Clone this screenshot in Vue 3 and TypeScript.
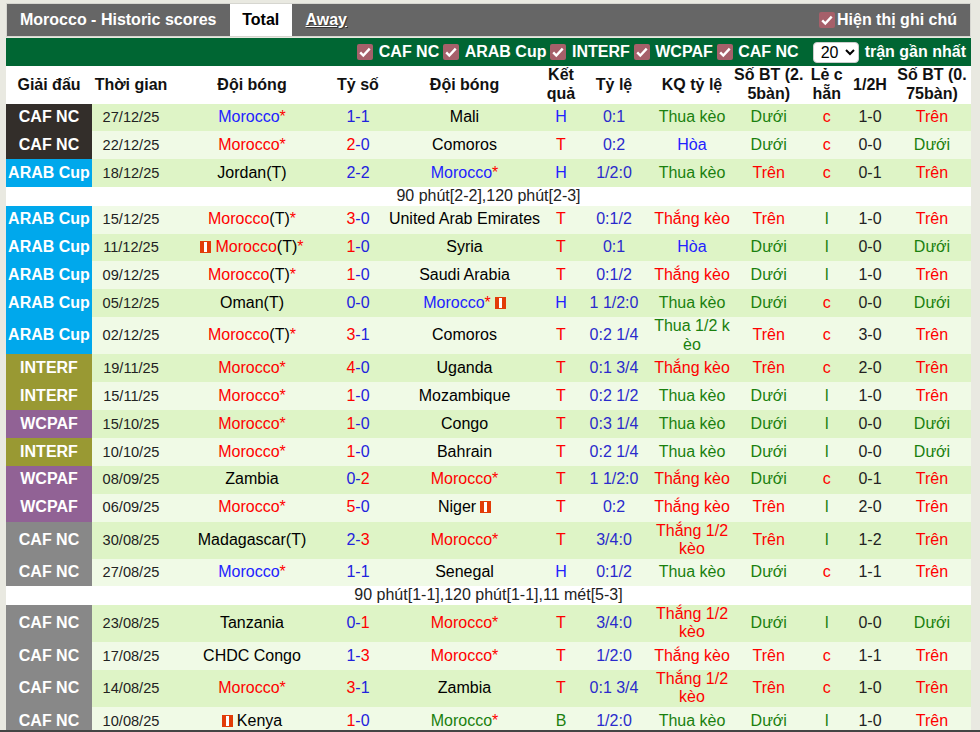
<script setup lang="ts">
import { ref } from 'vue'

interface Team {
  name: string
  tone?: 'red' | 'blue' | 'green'
  neutral?: boolean
  star?: boolean
  card?: 'before' | 'after'
}

interface Match {
  league: string
  leagueClass: string
  date: string
  home: Team
  score: string
  away: Team
  res: string
  odds: string
  kq: string
  bt: string
  le: string
  half: string
  bt2: string
  note?: string
}

const LEAGUE: Record<string, [string, string]> = {
  caf1: ['CAF NC', 'lg-caf-dark'],
  arab: ['ARAB Cup', 'lg-arab'],
  interf: ['INTERF', 'lg-interf'],
  wcpaf: ['WCPAF', 'lg-wcpaf'],
  caf2: ['CAF NC', 'lg-caf'],
}

const mor = (tone: Team['tone'], neutral = false, card?: Team['card']): Team => ({
  name: 'Morocco',
  tone,
  neutral,
  star: true,
  card,
})
const opp = (name: string, card?: Team['card']): Team => ({ name, card })

function m(
  lg: string,
  date: string,
  home: Team,
  score: string,
  away: Team,
  rest: string,
  note?: string,
): Match {
  const [res, odds, kq, bt, le, half, bt2] = rest.split('|')
  return {
    league: LEAGUE[lg][0],
    leagueClass: LEAGUE[lg][1],
    date,
    home,
    score,
    away,
    res,
    odds,
    kq,
    bt,
    le,
    half,
    bt2,
    note,
  }
}

const matches: Match[] = [
  m('caf1', '27/12/25', mor('blue'), '1-1', opp('Mali'), 'H|0:1|Thua kèo|Dưới|c|1-0|Trên'),
  m('caf1', '22/12/25', mor('red'), '2-0', opp('Comoros'), 'T|0:2|Hòa|Dưới|c|0-0|Dưới'),
  m('arab', '18/12/25', opp('Jordan(T)'), '2-2', mor('blue'), 'H|1/2:0|Thua kèo|Trên|c|0-1|Trên', '90 phút[2-2],120 phút[2-3]'),
  m('arab', '15/12/25', mor('red', true), '3-0', opp('United Arab Emirates'), 'T|0:1/2|Thắng kèo|Trên|l|1-0|Trên'),
  m('arab', '11/12/25', mor('red', true, 'before'), '1-0', opp('Syria'), 'T|0:1|Hòa|Dưới|l|0-0|Dưới'),
  m('arab', '09/12/25', mor('red', true), '1-0', opp('Saudi Arabia'), 'T|0:1/2|Thắng kèo|Dưới|l|1-0|Trên'),
  m('arab', '05/12/25', opp('Oman(T)'), '0-0', mor('blue', false, 'after'), 'H|1 1/2:0|Thua kèo|Dưới|c|0-0|Dưới'),
  m('arab', '02/12/25', mor('red', true), '3-1', opp('Comoros'), 'T|0:2 1/4|Thua 1/2 kèo|Trên|c|3-0|Trên'),
  m('interf', '19/11/25', mor('red'), '4-0', opp('Uganda'), 'T|0:1 3/4|Thắng kèo|Trên|c|2-0|Trên'),
  m('interf', '15/11/25', mor('red'), '1-0', opp('Mozambique'), 'T|0:2 1/2|Thua kèo|Dưới|l|1-0|Trên'),
  m('wcpaf', '15/10/25', mor('red'), '1-0', opp('Congo'), 'T|0:3 1/4|Thua kèo|Dưới|l|0-0|Dưới'),
  m('interf', '10/10/25', mor('red'), '1-0', opp('Bahrain'), 'T|0:2 1/4|Thua kèo|Dưới|l|0-0|Dưới'),
  m('wcpaf', '08/09/25', opp('Zambia'), '0-2', mor('red'), 'T|1 1/2:0|Thắng kèo|Dưới|c|0-1|Trên'),
  m('wcpaf', '06/09/25', mor('red'), '5-0', opp('Niger', 'after'), 'T|0:2|Thắng kèo|Trên|l|2-0|Trên'),
  m('caf2', '30/08/25', opp('Madagascar(T)'), '2-3', mor('red'), 'T|3/4:0|Thắng 1/2 kèo|Trên|l|1-2|Trên'),
  m('caf2', '27/08/25', mor('blue'), '1-1', opp('Senegal'), 'H|0:1/2|Thua kèo|Dưới|c|1-1|Trên', '90 phút[1-1],120 phút[1-1],11 mét[5-3]'),
  m('caf2', '23/08/25', opp('Tanzania'), '0-1', mor('red'), 'T|3/4:0|Thắng 1/2 kèo|Dưới|l|0-0|Dưới'),
  m('caf2', '17/08/25', opp('CHDC Congo'), '1-3', mor('red'), 'T|1/2:0|Thắng kèo|Trên|c|1-1|Trên'),
  m('caf2', '14/08/25', mor('red'), '3-1', opp('Zambia'), 'T|0:1 3/4|Thắng 1/2 kèo|Trên|c|1-0|Trên'),
  m('caf2', '10/08/25', opp('Kenya', 'before'), '1-0', mor('green'), 'B|1/2:0|Thua kèo|Dưới|l|1-0|Trên'),
]

const filters = ['CAF NC', 'ARAB Cup', 'INTERF', 'WCPAF', 'CAF NC']
const headers = ['Giải đấu', 'Thời gian', 'Đội bóng', 'Tỷ số', 'Đội bóng', 'Kết quả', 'Tỷ lệ', 'KQ tỷ lệ', 'Số BT (2.5bàn)', 'Lẻ c hẵn', '1/2H', 'Số BT (0.75bàn)']
const limit = ref('20')

function resTone(r: string) {
  return r === 'T' ? 'red' : r === 'H' ? 'blue' : 'green'
}
function kqTone(k: string) {
  return k.startsWith('Thắng') ? 'red' : k === 'Hòa' ? 'blue' : 'green'
}
function btTone(b: string) {
  return b === 'Trên' ? 'red' : 'green'
}
function leTone(l: string) {
  return l === 'c' ? 'red' : 'green'
}
function scoreParts(s: string) {
  const [a, b] = s.split('-')
  return {
    a,
    b,
    aTone: Number(a) > Number(b) ? 'red' : 'score',
    bTone: Number(b) > Number(a) ? 'red' : 'score',
  }
}
</script>

<template>
  <div class="page">
    <div class="topbar">
      <span class="title">Morocco - Historic scores</span>
      <span class="tab">Total</span>
      <a class="away" href="#">Away</a>
      <label class="show-note">
        <span class="chk">
          <svg viewBox="0 0 16 16" width="16" height="16"><path d="M3.2 8.4l3.1 3.2 6.4-7" fill="none" stroke="#fff" stroke-width="2.4" /></svg>
        </span>
        Hiện thị ghi chú
      </label>
    </div>

    <div class="filterbar">
      <label v-for="(f, i) in filters" :key="i" class="filter">
        <span class="chk">
          <svg viewBox="0 0 16 16" width="16" height="16"><path d="M3.2 8.4l3.1 3.2 6.4-7" fill="none" stroke="#fff" stroke-width="2.4" /></svg>
        </span>
        {{ f }}
      </label>
      <select v-model="limit" class="limit">
        <option value="10">10</option>
        <option value="20">20</option>
      </select>
      <span class="recent">trận gần nhất</span>
    </div>

    <div class="row head">
      <div v-for="(h, i) in headers" :key="i" class="cell"><span>{{ h }}</span></div>
    </div>

    <template v-for="(r, i) in matches" :key="i">
      <div class="row" :class="i % 2 === 0 ? 'even' : 'odd'">
        <div class="cell league" :class="r.leagueClass"><span>{{ r.league }}</span></div>
        <div class="cell date"><span>{{ r.date }}</span></div>
        <div v-for="(t, side) in [r.home, null, r.away]" :key="side" class="cell">
          <span v-if="t" class="team">
            <svg v-if="t.card === 'before'" class="card before" viewBox="0 0 11 12" width="11" height="12"><rect width="11" height="12" fill="#e23c08" /><rect x="4" y="1" width="3" height="10" fill="#fff" /></svg>
            <span :class="t.tone">{{ t.name }}</span><template v-if="t.neutral">(T)</template><span v-if="t.star" class="red">*</span>
            <svg v-if="t.card === 'after'" class="card after" viewBox="0 0 11 12" width="11" height="12"><rect width="11" height="12" fill="#e23c08" /><rect x="4" y="1" width="3" height="10" fill="#fff" /></svg>
          </span>
          <span v-else>
            <span :class="scoreParts(r.score).aTone">{{ scoreParts(r.score).a }}</span><span class="score">-</span><span :class="scoreParts(r.score).bTone">{{ scoreParts(r.score).b }}</span>
          </span>
        </div>
        <div class="cell" :class="resTone(r.res)"><span>{{ r.res }}</span></div>
        <div class="cell odds"><span>{{ r.odds }}</span></div>
        <div class="cell" :class="kqTone(r.kq)"><span>{{ r.kq }}</span></div>
        <div class="cell" :class="btTone(r.bt)"><span>{{ r.bt }}</span></div>
        <div class="cell" :class="leTone(r.le)"><span>{{ r.le }}</span></div>
        <div class="cell half"><span>{{ r.half }}</span></div>
        <div class="cell" :class="btTone(r.bt2)"><span>{{ r.bt2 }}</span></div>
      </div>
      <div v-if="r.note" class="note">{{ r.note }}</div>
    </template>
  </div>
</template>

<style scoped>
.page {
  box-sizing: border-box;
  width: 980px;
  height: 732px;
  padding: 3px 9px 0 6px;
  overflow: hidden;
  background: #e9e9e1;
  border-bottom: 2px solid #444;
  font-family: "Liberation Sans", Arial, sans-serif;
  font-size: 16px;
  line-height: 18.5px;
  color: #000;
}

.topbar {
  box-sizing: border-box;
  display: flex;
  align-items: stretch;
  height: 34px;
  background: #666;
  border: 1px solid #d6d6d0;
  color: #fff;
  font-weight: bold;
}

.title {
  align-self: center;
  margin: 0 13px;
}

.tab {
  width: 62.5px;
  background: #fff;
  color: #000;
  text-align: center;
  line-height: 32px;
}

.away {
  align-self: center;
  margin-left: 13.5px;
  color: #fff;
  text-shadow: 1px 1px 1px #333;
}

.show-note {
  display: flex;
  align-items: center;
  gap: 2px;
  margin-left: auto;
  padding-right: 13px;
}

.chk {
  flex: none;
  width: 16px;
  height: 16px;
  background: #a6606a;
  border-radius: 2px;
}

.chk svg {
  display: block;
}

.filterbar {
  display: flex;
  align-items: center;
  justify-content: flex-end;
  height: 28px;
  margin-top: 1px;
  padding-right: 5px;
  background: #006633;
  color: #fff;
  font-weight: bold;
}

.filter {
  display: flex;
  align-items: center;
  gap: 5.5px;
  margin-right: 4px;
}

.limit {
  box-sizing: border-box;
  width: 46px;
  height: 21px;
  margin: 0 6px 0 10px;
  padding: 0 0 0 3px;
  background-color: #fff;
  border: 1px solid #ccc;
  border-radius: 4px;
  font-family: inherit;
  font-size: 16px;
  color: #000;
}

.row {
  display: grid;
  grid-template-columns: 86px 78px 164px 48px 165px 28px 78px 78px 75.5px 40.5px 46px 78px;
  min-height: 27.9px;
}

/* stripes skip the note rows, so they just follow the match index */
.even {
  background: #def4c6;
}

.odd {
  background: #f0fae6;
}

.head {
  height: 37.5px;
  background: #fff;
  font-weight: bold;
  color: #111;
}

.cell {
  display: flex;
  align-items: center;
  justify-content: center;
  text-align: center;
  word-break: break-all;
}

.head .cell:nth-child(1),
.head .cell:nth-child(2),
.head .cell:nth-child(3),
.head .cell:nth-child(5) {
  white-space: nowrap;
}

.head .cell:nth-child(4),
.head .cell:nth-child(6),
.head .cell:nth-child(10) {
  word-break: normal;
}

.team {
  word-break: normal;
  white-space: nowrap;
}

.card {
  vertical-align: -1px;
}

.card.before {
  margin-right: 4px;
}

.card.after {
  margin-left: 4px;
}

.league {
  color: #fff;
  font-weight: bold;
  word-break: normal;
  white-space: nowrap;
}

.lg-caf-dark {
  background: #332e2a;
}

.lg-arab {
  background: #00a8ec;
}

.lg-interf {
  background: #999933;
}

.lg-wcpaf {
  background: #916295;
}

.lg-caf {
  background: #888;
}

.date {
  font-size: 14.6px;
  color: #222;
}

.half {
  color: #222;
}

.red {
  color: #f00;
}

.blue {
  color: #2222ff;
}

.green {
  color: #1a800e;
}

.score {
  color: #2222dd;
}

.odds {
  color: #2a2acc;
}

.note {
  height: 18.5px;
  background: #fff;
  text-align: center;
  color: #222;
}
</style>
